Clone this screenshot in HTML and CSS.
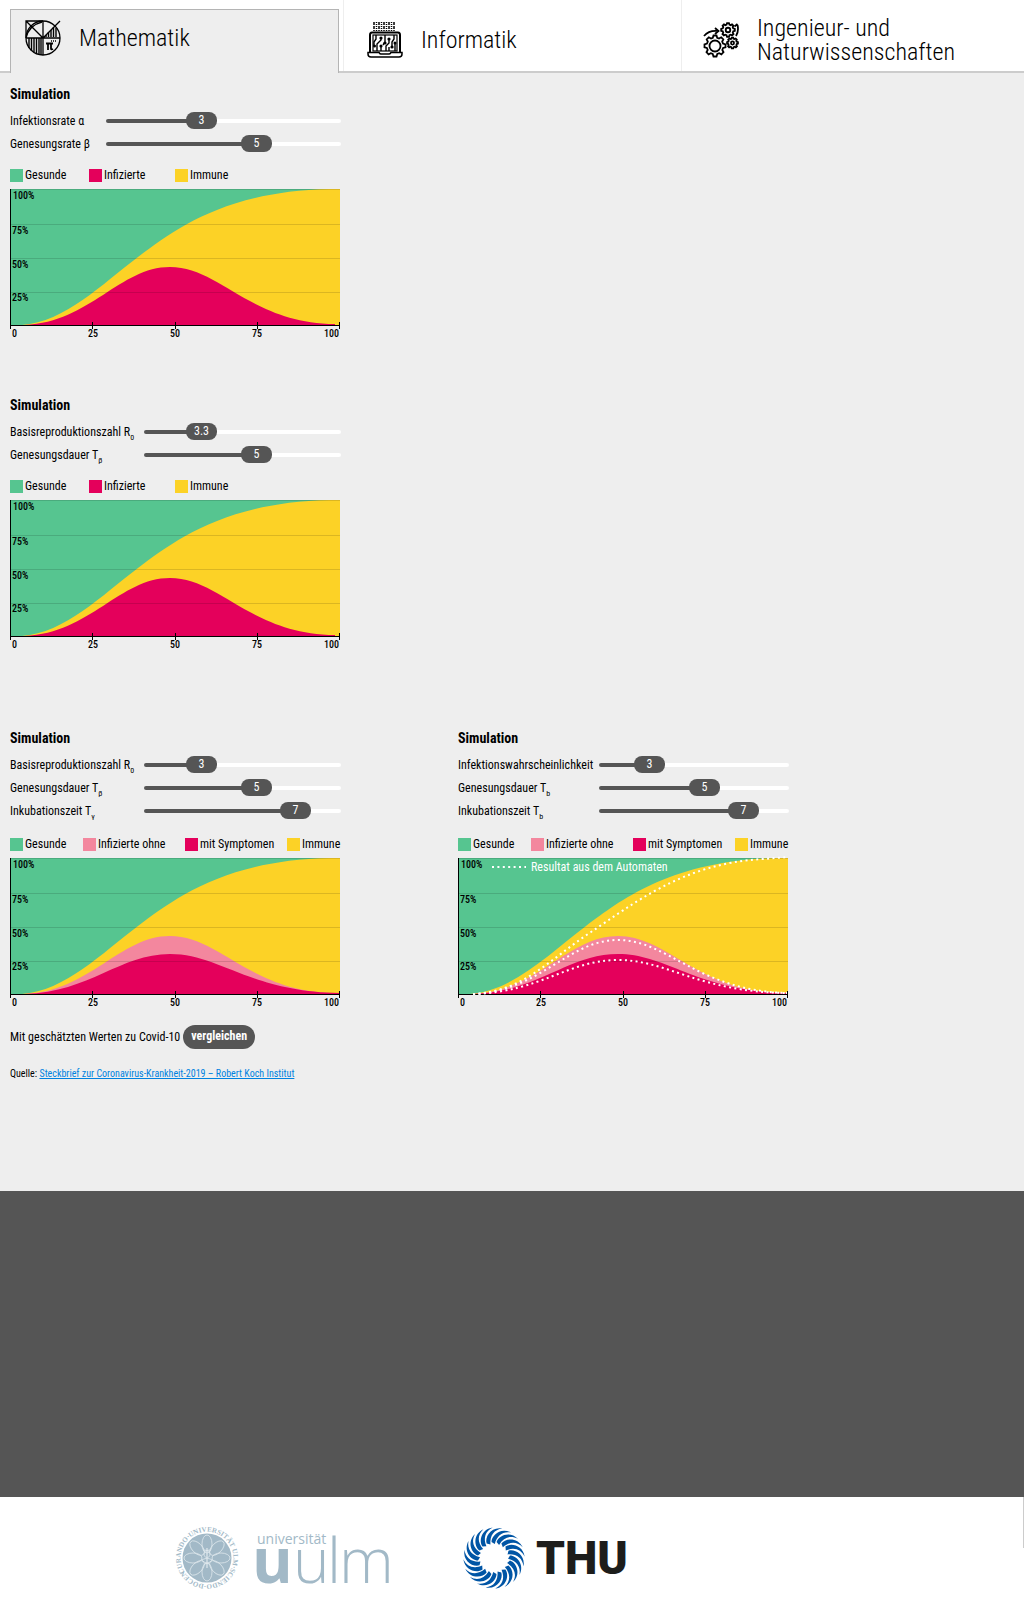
FILE: index.html
```
<!DOCTYPE html>
<html lang="de">
<head>
<meta charset="utf-8">
<meta name="viewport" content="width=device-width, initial-scale=1">
<title>Simulation</title>
<link rel="stylesheet" href="styles.css">
</head>
<body>
<svg class="defs" aria-hidden="true">
  <defs>
    <g id="grid">
      <path d="M0 35.5H330M0 69.5H330M0 103.5H330M0 .5H330" stroke="#000" stroke-opacity=".13" fill="none"/>
    </g>
    <g id="axes">
      <path d="M.5 0V140M0 136.5H330M82.500 133V140M165.500 133V140M247.500 133V140M329.500 133V140" stroke="#000" fill="none"/>
    </g>
    <path id="healthy" fill="#56c590" d="M0 0H330V136H0Z"/>
    <path id="immune" fill="#fcd226" d="M12 136C55 133 92 95 128 68S215 2 320 0H330V136Z"/>
    <path id="infected" d="M15 136C80 133 110 78 160 78S240 134 325 135V136Z"/>
    <path id="symptoms" fill="#e4005b" d="M15 136C80 134 110 96 160 96S240 134 330 135V136Z"/>
    <path id="gear" d="M-1.500-10.500H1.500L2.200-8.200 4-7.500 6.200-8.700 8.300-6.600 7.200-4.400 8-2.500 10.500-1.700V1.300L8.100 2 7.300 4 8.500 6.200 6.400 8.300 4.200 7.200 2.300 8 1.500 10.500H-1.500L-2.300 8-4.200 7.200-6.400 8.300-8.500 6.200-7.300 4-8.100 2-10.500 1.300V-1.700L-8-2.500-7.200-4.400-8.300-6.600-6.200-8.700-4-7.500-2.200-8.200Z"/>
    <path id="blade" d="M-2.500-16C-2.500-23 7-31 17-25.500C9-27 3-23 .8-14Z"/>
    <g id="blades5">
      <use href="#blade"/><use href="#blade" transform="rotate(18)"/><use href="#blade" transform="rotate(36)"/><use href="#blade" transform="rotate(54)"/><use href="#blade" transform="rotate(72)"/>
    </g>
    <ellipse id="petal" cx="0" cy="-14" rx="5" ry="9"/>
  </defs>
</svg>

<header class="tabs">
  <nav class="tabs-row">
    <div class="tab-cell tab-cell-active">
      <a class="tab tab-active" href="#mathematik" aria-current="page">
        <svg class="tab-icon" viewBox="0 0 36 36" fill="none" stroke="#000" stroke-width="1.300">
          <circle cx="18" cy="18" r="17"/>
          <path d="M1 18V1H18M18 1V35M1 18H35M1 1L18 18 35 1M1 18Q4 5 17 2"/>
          <path stroke-width="1.400" d="M4 18V28M6.500 18V31M9 18V32M11.500 18V34M14 18V35M16 18V35M21 17V15M23.500 17V12M26 17V10M28.500 17V7M31 17V8"/>
          <path stroke-width="1.800" d="M21 23.500H28M23 23.500V30M26 23.500V28.500Q26 30 28 29"/>
          <path stroke-dasharray="1 1" d="M26 21H32"/>
        </svg>
        <span>Mathematik</span>
      </a>
    </div>
    <div class="tab-cell">
      <a class="tab" href="#informatik">
        <svg class="tab-icon" viewBox="0 0 36 36" fill="none" stroke="#000" stroke-width="1.500">
          <path stroke-dasharray="3 1" d="M7 0V9M12 0V9M17 0V9M22 0V9M27 0V9"/>
          <path stroke-dasharray="1 1" d="M9.500 0V9M14.500 0V9M19.500 0V9M24.500 0V9"/>
          <path stroke-width="2" d="M3 30V13Q3 10.500 5 10.500H31Q33 10.500 33 13V30"/>
          <rect x="6" y="13" width="24" height="16" stroke-width="1.200"/>
          <path d="M1 30.500H12Q13 32 14 32H22Q23 32 24 30.500H35V32Q35 35 32 35H4Q1 35 1 32Z"/>
          <path stroke-width="1.400" d="M9 13V17L7 20V24M10 29V22L14 18V15M14 29V24M18 13V20L16 23M19 29V24L22 21V17M22 29V25M27 13V17L25 20V25M28 29V22"/>
          <g fill="#000" stroke="none"><circle cx="14" cy="16" r="1.600"/><circle cx="14" cy="24" r="1.600"/><circle cx="22" cy="17" r="1.600"/><circle cx="18" cy="21" r="1.600"/><circle cx="25" cy="25" r="1.600"/><circle cx="7.500" cy="24" r="1.500"/><circle cx="28" cy="21" r="1.500"/></g>
        </svg>
        <span>Informatik</span>
      </a>
    </div>
    <div class="tab-cell">
      <a class="tab" href="#naturwissenschaften">
        <svg class="tab-icon" viewBox="0 0 36 36" fill="none" stroke="#000" stroke-width="1.800">
          <use href="#gear" transform="translate(12 24)"/>
          <circle cx="12" cy="24" r="5.500"/>
          <g transform="translate(25 8) scale(.65)" stroke-width="2.800"><use href="#gear"/><circle r="3.500"/></g>
          <g transform="translate(29.500 21) scale(.52)" stroke-width="3.400"><use href="#gear"/><circle r="3"/></g>
          <path d="M1 14Q6 8 15 9M12 6L15.500 9 12 12M33 14Q36 9 34.500 3M31.500 4.500L34.500 2"/>
        </svg>
        <span>Ingenieur- und Naturwissenschaften</span>
      </a>
    </div>
  </nav>
</header>

<main class="content">
  <section class="panel panel-rates">
    <h2>Simulation</h2>
    <div class="control"><label for="a1">Infektionsrate α</label><div class="slider" style="--v:.392"><input id="a1" type="range" min="0" max="1000" value="392"><output for="a1">3</output></div></div>
    <div class="control"><label for="a2">Genesungsrate β</label><div class="slider" style="--v:.662"><input id="a2" type="range" min="0" max="1000" value="662"><output for="a2">5</output></div></div>
    <ul class="legend legend-three"><li class="green">Gesunde</li><li class="red">Infizierte</li><li class="yellow">Immune</li></ul>
    <svg class="chart" viewBox="0 0 331 150" role="img" aria-label="Verlauf">
      <use href="#healthy"/><use href="#immune"/><use href="#infected" fill="#e4005b"/><use href="#grid"/><use href="#axes"/>
      <text x="3" y="10">100%</text><text x="2" y="45">75%</text><text x="2" y="79">50%</text><text x="2" y="112">25%</text>
      <text x="2" y="148">0</text><text class="mid" x="83" y="148">25</text><text class="mid" x="165" y="148">50</text><text class="mid" x="247" y="148">75</text><text class="end" x="329" y="148">100</text>
    </svg>
  </section>

  <section class="panel panel-base">
    <h2>Simulation</h2>
    <div class="control"><label for="b1">Basisreproduktionszahl R<sub>0</sub></label><div class="slider" style="--v:.253"><input id="b1" type="range" min="0" max="1000" value="253"><output for="b1">3.3</output></div></div>
    <div class="control"><label for="b2">Genesungsdauer T<sub>β</sub></label><div class="slider" style="--v:.584"><input id="b2" type="range" min="0" max="1000" value="584"><output for="b2">5</output></div></div>
    <ul class="legend legend-three"><li class="green">Gesunde</li><li class="red">Infizierte</li><li class="yellow">Immune</li></ul>
    <svg class="chart" viewBox="0 0 331 150" role="img" aria-label="Verlauf">
      <use href="#healthy"/><use href="#immune"/><use href="#infected" fill="#e4005b"/><use href="#grid"/><use href="#axes"/>
      <text x="3" y="10">100%</text><text x="2" y="45">75%</text><text x="2" y="79">50%</text><text x="2" y="112">25%</text>
      <text x="2" y="148">0</text><text class="mid" x="83" y="148">25</text><text class="mid" x="165" y="148">50</text><text class="mid" x="247" y="148">75</text><text class="end" x="329" y="148">100</text>
    </svg>
  </section>

  <div class="pair">
    <section class="panel panel-base">
      <h2>Simulation</h2>
      <div class="control"><label for="c1">Basisreproduktionszahl R<sub>0</sub></label><div class="slider" style="--v:.253"><input id="c1" type="range" min="0" max="1000" value="253"><output for="c1">3</output></div></div>
      <div class="control"><label for="c2">Genesungsdauer T<sub>β</sub></label><div class="slider" style="--v:.584"><input id="c2" type="range" min="0" max="1000" value="584"><output for="c2">5</output></div></div>
      <div class="control"><label for="c3">Inkubationszeit T<sub>γ</sub></label><div class="slider" style="--v:.819"><input id="c3" type="range" min="0" max="1000" value="819"><output for="c3">7</output></div></div>
      <ul class="legend legend-four"><li class="green">Gesunde</li><li class="pink">Infizierte ohne</li><li class="red">mit Symptomen</li><li class="yellow">Immune</li></ul>
      <svg class="chart" viewBox="0 0 331 150" role="img" aria-label="Verlauf">
        <use href="#healthy"/><use href="#immune"/><use href="#infected" fill="#f3879e"/><use href="#symptoms"/><use href="#grid"/><use href="#axes"/>
        <text x="3" y="10">100%</text><text x="2" y="45">75%</text><text x="2" y="79">50%</text><text x="2" y="112">25%</text>
        <text x="2" y="148">0</text><text class="mid" x="83" y="148">25</text><text class="mid" x="165" y="148">50</text><text class="mid" x="247" y="148">75</text><text class="end" x="329" y="148">100</text>
      </svg>
      <p class="compare">Mit geschätzten Werten zu Covid-10 <button type="button">vergleichen</button></p>
      <p class="source">Quelle: <a href="#quelle">Steckbrief zur Coronavirus-Krankheit-2019 – Robert Koch Institut</a></p>
    </section>

    <section class="panel panel-automaton">
      <h2>Simulation</h2>
      <div class="control"><label for="d1">Infektionswahrscheinlichkeit</label><div class="slider" style="--v:.22"><input id="d1" type="range" min="0" max="1000" value="220"><output for="d1">3</output></div></div>
      <div class="control"><label for="d2">Genesungsdauer T<sub>b</sub></label><div class="slider" style="--v:.566"><input id="d2" type="range" min="0" max="1000" value="566"><output for="d2">5</output></div></div>
      <div class="control"><label for="d3">Inkubationszeit T<sub>b</sub></label><div class="slider" style="--v:.811"><input id="d3" type="range" min="0" max="1000" value="811"><output for="d3">7</output></div></div>
      <ul class="legend legend-four"><li class="green">Gesunde</li><li class="pink">Infizierte ohne</li><li class="red">mit Symptomen</li><li class="yellow">Immune</li></ul>
      <svg class="chart" viewBox="0 0 331 150" role="img" aria-label="Verlauf">
        <use href="#healthy"/><use href="#immune"/><use href="#infected" fill="#f3879e"/><use href="#symptoms"/><use href="#grid"/><use href="#axes"/>
        <g fill="none" stroke="#fff" stroke-width="2" stroke-dasharray="2 3.400">
          <path d="M15 136C65 134 92 101 133 74S225 5 305 1L330-1"/>
          <path d="M15 136C83 133 110 82 160 82S240 133 329 135"/>
          <path d="M15 136C83 134 110 102 160 102S240 134 329 135"/>
          <path d="M34 9H68"/>
        </g>
        <text class="note" x="73" y="13">Resultat aus dem Automaten</text>
        <text x="3" y="10">100%</text><text x="2" y="45">75%</text><text x="2" y="79">50%</text><text x="2" y="112">25%</text>
        <text x="2" y="148">0</text><text class="mid" x="83" y="148">25</text><text class="mid" x="165" y="148">50</text><text class="mid" x="247" y="148">75</text><text class="end" x="329" y="148">100</text>
      </svg>
    </section>
  </div>
</main>

<div class="band"></div>

<footer class="footer">
  <svg class="logo-ulm" viewBox="0 0 218 64" role="img" aria-label="universität uulm">
    <g transform="translate(32 32)">
      <circle r="24.500" fill="#a2b9c7"/>
      <g fill="none" stroke="#dfe8ed" stroke-width=".8">
        <use href="#petal"/><use href="#petal" transform="rotate(45)"/><use href="#petal" transform="rotate(90)"/><use href="#petal" transform="rotate(135)"/><use href="#petal" transform="rotate(180)"/><use href="#petal" transform="rotate(225)"/><use href="#petal" transform="rotate(270)"/><use href="#petal" transform="rotate(315)"/>
        <path d="M0-10V10" stroke-width="1.200"/>
        <path d="M-4-8Q3-8 3-4T-3 1 2 6M4-8Q-3-8-3-4T3 1-2 6"/>
      </g>
      <path id="ring" fill="none" d="M-22.100 14.300A26.300 26.300 0 1 1 22.100-14.300A26.300 26.300 0 1 1-22.100 14.300"/>
      <text class="seal-text"><textPath href="#ring">CURANDO·UNIVERSITÄT ULM·SCIENDO·DOCENDO·</textPath></text>
    </g>
    <g fill="#a2b9c7">
      <text class="ulm-small" x="82" y="18">universität</text>
      <text class="ulm-bold" x="77" y="57">u</text>
      <text class="ulm-light" x="118" y="57">u</text><text class="ulm-light" x="152" y="57">l</text><text class="ulm-light" x="164" y="57">m</text>
    </g>
  </svg>
  <svg class="logo-thu" viewBox="0 0 164 64" role="img" aria-label="THU">
    <g transform="translate(31 32)" fill="#0055a5">
      <use href="#blades5"/><use href="#blades5" transform="rotate(90)"/><use href="#blades5" transform="rotate(180)"/><use href="#blades5" transform="rotate(270)"/>
    </g>
    <text class="thu-text" x="73" y="48">THU</text>
  </svg>
</footer>
</body>
</html>
```
FILE: styles.css
```
* { box-sizing: border-box; }

body {
  margin: 0;
  background: #fff;
  color: #000;
  font-family: "Roboto Condensed", Roboto, sans-serif;
  font-size: 12px;
  line-height: 16px;
}

.defs { position: absolute; width: 0; height: 0; }

/* Tabs */
.tabs { border-bottom: 2px solid #ccc; background: #fff; }
.tabs-row { display: grid; grid-template-columns: 344fr 338fr 342fr; height: 71px; }
.tab-cell { display: flex; border-right: 1px solid #eee; padding-left: 18px; padding-top: 8px; }
.tab-cell:last-child { border-right: 0; padding-left: 16px; }
.tab-cell-active { padding: 9px 4px 0 10px; }
.tab {
  flex: 1;
  display: flex;
  align-items: center;
  gap: 18px;
  padding: 0 24px 0 5px;
  color: #000;
  text-decoration: none;
  font-size: 24px;
  font-weight: 300;
  line-height: 24px;
}
.tab-active {
  margin-bottom: -2px;
  padding: 0 14px 7px;
  background: #eee;
  border: 1px solid #b4b4b4;
  border-bottom: 0;
}
.tab-icon { width: 36px; height: 36px; flex: none; }

/* Simulation panels */
.content { background: #eee; padding: 13px 10px 109px; }
.panel { max-width: 331px; }
.content > .panel { margin-bottom: 58px; }
.content > .panel + .panel { margin-bottom: 80px; }
.pair { display: grid; grid-template-columns: repeat(2, 331px); gap: 40px 117px; }

h2 { margin: 0 0 7px; font-size: 14px; line-height: 16px; font-weight: 700; }

.control { display: grid; grid-template-columns: var(--label) 1fr; align-items: center; height: 23px; }
.panel-rates { --label: 96px; }
.panel-base { --label: 134px; }
.panel-automaton { --label: 141px; }
.control label { white-space: nowrap; }
sub { font-size: 8px; line-height: 0; vertical-align: -4px; }

.slider { position: relative; height: 17px; }
.slider input {
  -webkit-appearance: none;
  appearance: none;
  display: block;
  width: 100%;
  height: 17px;
  margin: 0;
  background: transparent;
}
.slider input::-webkit-slider-runnable-track {
  height: 4px;
  border-radius: 2px;
  background: linear-gradient(to right, #555 calc(var(--v) * 100%), #fff 0);
}
.slider input::-webkit-slider-thumb {
  -webkit-appearance: none;
  width: 31px;
  height: 17px;
  margin-top: -7px;
  border-radius: 8px;
  background: #555;
}
.slider output {
  position: absolute;
  top: 0;
  left: calc(var(--v) * (100% - 31px));
  width: 31px;
  line-height: 17px;
  text-align: center;
  color: #fff;
  pointer-events: none;
}

.legend { display: grid; margin: 12px 0 6px; padding: 0; list-style: none; }
.legend-three { grid-template-columns: 79px 86px auto; }
.legend-four { grid-template-columns: 73px 102px 102px auto; margin-top: 14px; }
.legend li { display: flex; align-items: center; gap: 2px; white-space: nowrap; }
.legend li::before { content: ""; width: 13px; height: 13px; flex: none; }
.green::before { background: #56c590; }
.red::before { background: #e4005b; }
.pink::before { background: #f3879e; }
.yellow::before { background: #fcd226; }

.chart { display: block; width: 100%; height: auto; overflow: visible; }
.chart text { font-size: 10px; font-weight: 500; }
.chart .mid { text-anchor: middle; }
.chart .end { text-anchor: end; }
.chart .note { font-size: 12px; font-weight: 400; fill: #fff; }

.compare { display: flex; align-items: center; gap: 3px; margin: 17px 0; white-space: nowrap; }
.compare button {
  height: 24px;
  padding: 0 8px 2px;
  border: 0;
  border-radius: 12px;
  background: #555;
  color: #fff;
  font: inherit;
  font-weight: 700;
}
.source { margin: 0; font-size: 10px; white-space: nowrap; }
.source a { color: #0082e0; }

/* Bottom */
.band { height: 306px; background: #555; }
.footer {
  display: flex;
  align-items: flex-start;
  gap: 70px;
  padding: 29px 0 28px 175px;
  background: linear-gradient(#ccc, #ccc) right top / 1px 51px no-repeat;
}
.logo-ulm { width: 218px; height: 64px; overflow: visible; }
.logo-thu { width: 164px; height: 64px; overflow: visible; }
.seal-text { font: 700 7px "Liberation Serif", serif; fill: #a2b9c7; }
.ulm-small { font: 400 14px "Open Sans", sans-serif; }
.ulm-bold { font: 700 62px "Open Sans", sans-serif; }
.ulm-light { font: 300 62px "Open Sans", sans-serif; }
.thu-text { font: 900 46px Roboto, sans-serif; fill: #1d1d1b; }
```
